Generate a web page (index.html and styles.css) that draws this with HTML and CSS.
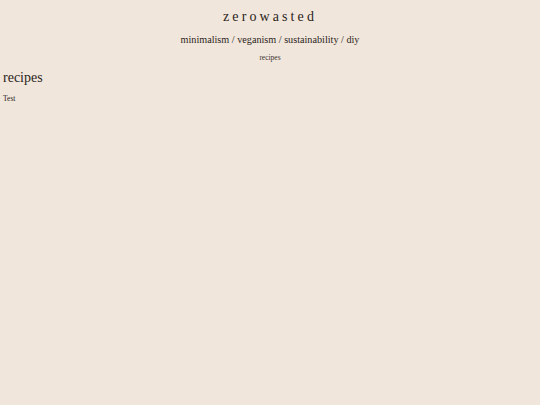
FILE: index.html
```html
<!DOCTYPE html>
<html>
<head>
<meta charset="utf-8">
<link rel="stylesheet" href="styles.css">
</head>
<body>
<header class="site-header">
  <h1 class="site-title">zerowasted</h1>
  <p class="site-tagline">minimalism / veganism / sustainability / diy</p>
  <nav class="site-nav"><a class="nav-link" href="#">recipes</a></nav>
</header>
<main class="content">
  <h2 class="page-title">recipes</h2>
  <p class="page-text">Test</p>
</main>
</body>
</html>
```
FILE: styles.css
```css
html, body {
  margin: 0;
  padding: 0;
  background: #f1e6dc;
  color: #2a2420;
  font-family: "Liberation Serif", "Times New Roman", serif;
}
.site-header {
  text-align: center;
  padding-top: 8px;
}
.site-title {
  margin: 0;
  font-size: 14px;
  font-weight: normal;
  letter-spacing: 3.1px;
  line-height: 18px;
}
.site-tagline {
  margin: 7px 0 0;
  font-size: 10.2px;
  line-height: 14px;
}
.site-nav {
  margin-top: 6px;
  font-size: 7.5px;
  line-height: 10px;
}
.nav-link {
  color: #3a3430;
  text-decoration: none;
}
.content {
  padding: 0 3px;
}
.page-title {
  margin: 5px 0 0;
  font-size: 14px;
  font-weight: normal;
  line-height: 20px;
}
.page-text {
  margin: 6px 0 0;
  font-size: 7.5px;
  line-height: 10px;
}
```
